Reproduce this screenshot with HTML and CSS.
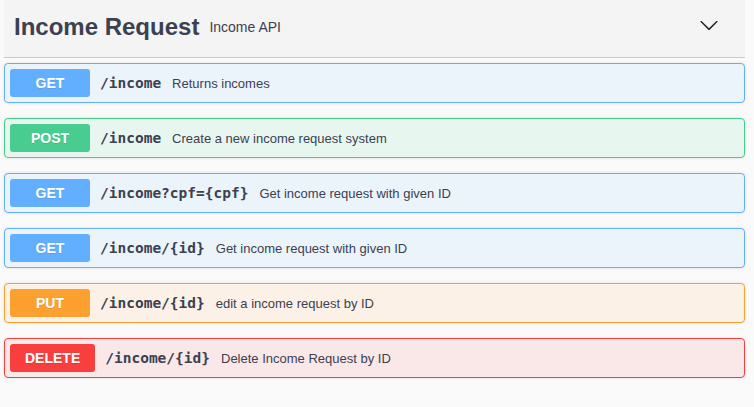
FILE: index.html
```html
<!DOCTYPE html>
<html>
<head>
<meta charset="utf-8">
<link rel="stylesheet" href="styles.css">
</head>
<body>
<div class="wrap">
  <div class="tag">
    <h4 class="tag-title">Income Request</h4>
    <small class="tag-desc">Income API</small>
    <svg class="arrow" width="20" height="20" viewBox="0 0 20 20"><path d="M17.418 6.109c.272-.268.709-.268.979 0s.271.701 0 .969l-7.908 7.83c-.27.268-.707.268-.979 0l-7.908-7.830c-.27-.268-.27-.701 0-.969.271-.268.709-.268.979 0L10 13.25l7.418-7.141z" fill="#222"/></svg>
  </div>
  <div class="op get"><span class="method">GET</span><span class="path">/income</span><span class="desc">Returns incomes</span></div>
  <div class="op post"><span class="method">POST</span><span class="path">/income</span><span class="desc">Create a new income request system</span></div>
  <div class="op get"><span class="method">GET</span><span class="path">/income?cpf={cpf}</span><span class="desc">Get income request with given ID</span></div>
  <div class="op get"><span class="method">GET</span><span class="path">/income/{id}</span><span class="desc">Get income request with given ID</span></div>
  <div class="op put"><span class="method">PUT</span><span class="path">/income/{id}</span><span class="desc">edit a income request by ID</span></div>
  <div class="op delete"><span class="method">DELETE</span><span class="path">/income/{id}</span><span class="desc">Delete Income Request by ID</span></div>
</div>
</body>
</html>
```
FILE: styles.css
```css
html, body {
  margin: 0;
  padding: 0;
  background: #fafafa;
  font-family: "Liberation Sans", Arial, sans-serif;
  color: #3b4151;
}
.wrap {
  padding: 0 9px 0 4px;
}
.tag {
  display: flex;
  align-items: center;
  height: 58px;
  box-sizing: border-box;
  background: #f4f4f4;
  border-bottom: 1px solid #c9cacd;
  padding: 0 26px 0 10px;
  margin-bottom: 5px;
}
.tag-title {
  margin: 0;
  font-size: 24px;
  font-weight: bold;
  line-height: 28px;
  color: #3b4151;
  margin-top: -3px;
}
.tag-desc {
  font-size: 14px;
  line-height: 16px;
  padding: 0 10px;
  margin-top: -3px;
  color: #3b4151;
}
.arrow {
  margin-left: auto;
  margin-top: -7px;
}
.op {
  display: flex;
  align-items: center;
  border: 1px solid;
  border-radius: 4px;
  padding: 5px;
  margin-bottom: 15px;
  box-shadow: 0 0 3px rgba(0,0,0,.12);
}
.method {
  box-sizing: border-box;
  min-width: 80px;
  padding: 6px 15px;
  border-radius: 3px;
  color: #fff;
  font-weight: bold;
  font-size: 14px;
  line-height: 16px;
  text-align: center;
  text-shadow: 0 1px 0 rgba(0,0,0,.1);
}
.path {
  padding: 0 11px 0 10px;
  font-family: "DejaVu Sans Mono", monospace;
  font-weight: bold;
  font-size: 14.5px;
  color: #3b4151;
}
.desc {
  font-size: 13px;
  color: #3b4151;
}
.get { background: #ebf3fb; border-color: #61affe; }
.get .method { background: #61affe; }
.post { background: #e8f6f0; border-color: #49cc90; }
.post .method { background: #49cc90; }
.put { background: #fbf1e6; border-color: #fca130; }
.put .method { background: #fca130; }
.delete { background: #fae7e7; border-color: #f93e3e; }
.delete .method { background: #f93e3e; }
```
